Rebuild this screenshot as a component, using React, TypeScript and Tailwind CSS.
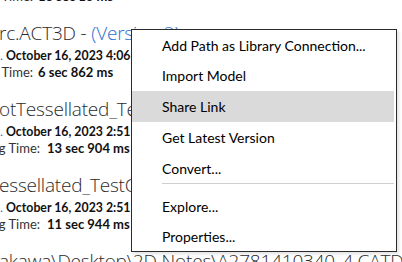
import React from 'react';

type Entry = {
  title: React.ReactNode;
  date: string;
  labelW: string;
  gap: string;
  time: string;
};

const ENTRIES: Entry[] = [
  { title: 'Assembly_Main.CATProduct', date: 'October 16, 2023 4:10 PM', labelW: 'w-[33px]', gap: 'ml-[5px]', time: '18 sec 13 ms' },
  {
    title: (
      <>
        rc.ACT3D - <span className="text-[#2a6fd0]">(Version 2)</span>
      </>
    ),
    date: 'October 16, 2023 4:06 PM',
    labelW: 'w-[33px]',
    gap: 'ml-[5px]',
    time: '6 sec 862 ms',
  },
  { title: 'otTessellated_TestCube.CATPart', date: 'October 16, 2023 2:51 PM', labelW: 'w-[40px]', gap: 'ml-[7px]', time: '13 sec 904 ms' },
  { title: 'essellated_TestCube.CATPart', date: 'October 16, 2023 2:51 PM', labelW: 'w-[40px]', gap: 'ml-[7px]', time: '11 sec 944 ms' },
  { title: 'akawa\\Desktop\\2D Notes\\A2781410340_4.CATDrawing', date: 'October 16, 2023 2:40 PM', labelW: 'w-[40px]', gap: 'ml-[7px]', time: '9 sec 120 ms' },
];

const MENU = [
  { label: 'Add Path as Library Connection...', h: 'h-[30px]' },
  { label: 'Import Model', h: 'h-[31px]' },
  { label: 'Share Link', h: 'h-[31px]', active: true },
  { label: 'Get Latest Version', h: 'h-[31px]' },
  { label: 'Convert...', h: 'h-[30px]', sepAfter: true },
  { label: 'Explore...', h: 'h-[30px]' },
  { label: 'Properties...', h: 'h-[30px]' },
];

const EntryBlock: React.FC<{ entry: Entry }> = ({ entry }) => (
  <div className="flex flex-col mb-[12px]">
    <div className="h-[30px] leading-[32px] -ml-[1px] whitespace-nowrap text-[19px] tracking-[-0.2px] font-light text-[#2b2b2b] font-['Open_Sans',sans-serif]">
      {entry.title}
    </div>
    <div className="h-[17px] leading-[17px] flex whitespace-nowrap text-[12.3px]">
      <span className="w-[3px] overflow-hidden text-[#2a6fd0]">.</span>
      <span className="ml-[3px] font-bold text-[#111]">{entry.date}</span>
    </div>
    <div className="h-[17px] leading-[17px] flex whitespace-nowrap text-[13px]">
      <span className={`${entry.labelW} shrink-0 flex justify-end overflow-hidden text-[#333]`}>
        <span className="shrink-0">Processing Time:</span>
      </span>
      <span className={`${entry.gap} font-bold text-[#111]`}>{entry.time}</span>
    </div>
  </div>
);

const App: React.FC = () => {
  return (
    <div className="relative w-[402px] h-[262px] overflow-hidden bg-white font-['Lato',sans-serif]">
      {/* scrolled list behind the menu */}
      <div className="flex flex-col -mt-[59px]">
        {ENTRIES.map((e, i) => (
          <EntryBlock key={i} entry={e} />
        ))}
      </div>

      {/* context menu */}
      <div className="absolute left-[131px] top-[29px] w-[266px] border border-[#2b2b2b] bg-white shadow-[2px_2px_3px_rgba(0,0,0,0.12)]">
        {MENU.map((m) => (
          <React.Fragment key={m.label}>
            <div
              className={`${m.h} flex items-center pl-[30px] mr-[2px] text-[14px] text-black whitespace-nowrap ${
                m.active ? 'bg-[#dadada]' : ''
              }`}
            >
              {m.label}
            </div>
            {m.sepAfter && <div className="h-px ml-[30px] mr-[2px] bg-[#cfcfcf] mb-[7px]" />}
          </React.Fragment>
        ))}
      </div>
    </div>
  );
};

export default App;
